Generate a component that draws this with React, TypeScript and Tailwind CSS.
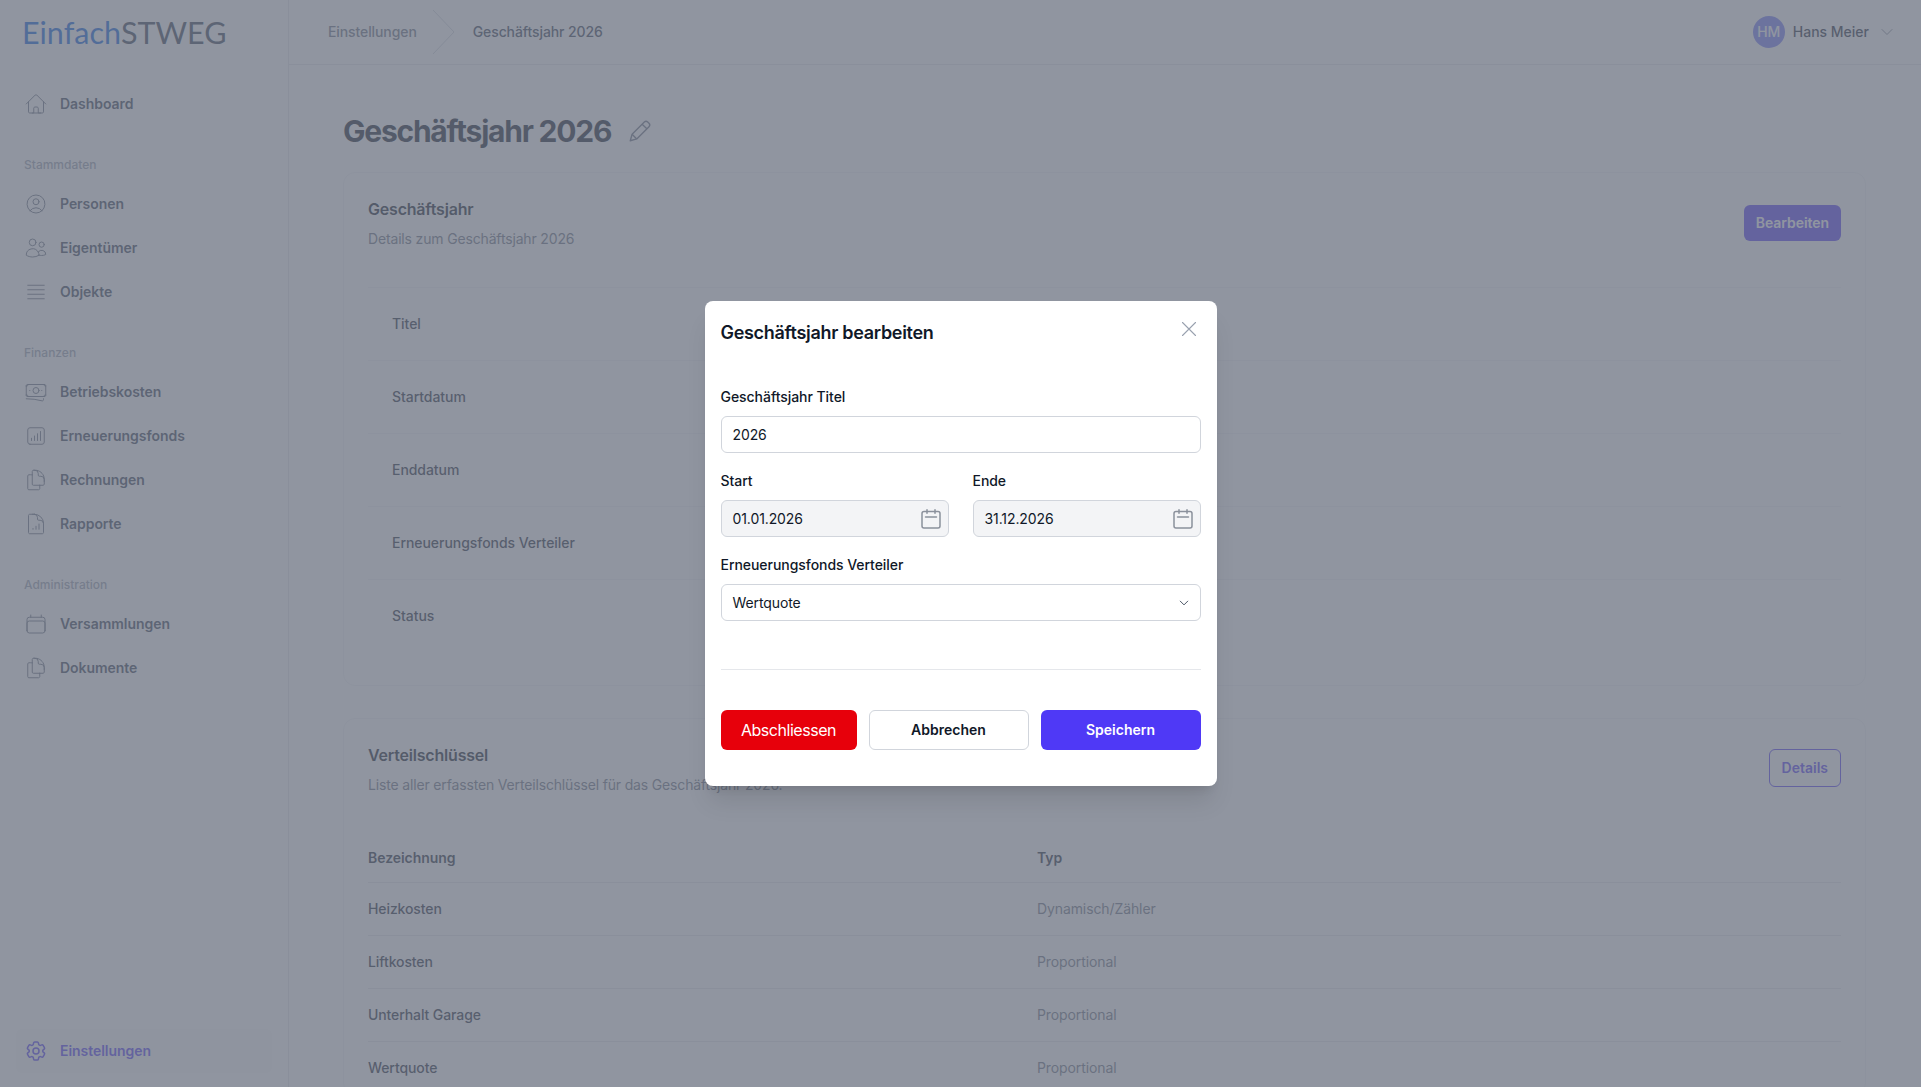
import React from "react";
import {
  HiOutlineHome,
  HiOutlineUserCircle,
  HiOutlineUsers,
  HiOutlineBars4,
  HiOutlineBanknotes,
  HiOutlineChartBarSquare,
  HiOutlineDocumentDuplicate,
  HiOutlineDocumentChartBar,
  HiOutlineCalendar,
  HiOutlineCog6Tooth,
  HiOutlineXMark,
  HiOutlineChevronDown,
} from "react-icons/hi2";

type IconT = React.ComponentType<{ className?: string; strokeWidth?: number }>;

function NavItem({ icon: Icon, label, active }: { icon: IconT; label: string; active?: boolean }) {
  return (
    <div className={`flex h-[44px] items-center gap-[12px] rounded-md px-[8px] text-sm font-semibold tracking-[-0.05px] ${active ? "text-[#4f39f6] bg-gray-50" : "text-gray-700"}`}>
      <Icon className={`h-[24px] w-[24px] ${active ? "text-[#4f39f6]" : "text-gray-500"}`} strokeWidth={active ? 1.5 : 1} />
      <span>{label}</span>
    </div>
  );
}

function NavHeading({ children }: { children: React.ReactNode }) {
  return <div className="mt-[29px] mb-[7px] flex h-[20px] items-center px-[8px] text-xs font-medium text-gray-400">{children}</div>;
}

function DetailRow({ label }: { label: string }) {
  return (
    <div className="flex h-[73px] items-center border-t border-gray-100 pl-[24px] text-sm font-medium tracking-[-0.05px] text-gray-800">
      {label}
    </div>
  );
}

function TableRow({ name, typ }: { name: string; typ: string }) {
  return (
    <div className="grid h-[53px] grid-cols-[669px_1fr] items-center border-t border-gray-200 text-sm tracking-[-0.1px]">
      <span className="font-medium text-gray-800">{name}</span>
      <span className="text-gray-500">{typ}</span>
    </div>
  );
}

function CalIcon() {
  return (
    <svg viewBox="0 0 20 20" className="h-[20px] w-[20px]" fill="none" stroke="#8b919c" strokeWidth="1.5" strokeLinecap="round">
      <rect x="1" y="2.5" width="18" height="16.5" rx="2" />
      <path d="M6 0.75v3.5M14 0.75v3.5M4.5 8h11" />
    </svg>
  );
}

function PencilIcon() {
  return (
    <svg viewBox="0 0 24 24" className="h-[26px] w-[26px] text-gray-500" fill="none" stroke="currentColor" strokeWidth="1.25" strokeLinejoin="round">
      <path d="M3 21l1.7-6L16 3.7a2.2 2.2 0 0 1 3.1 0l1.2 1.2a2.2 2.2 0 0 1 0 3.1L9 19.3z" />
      <path d="M14 5.7l4.3 4.3M4.7 15L9 19.3" />
    </svg>
  );
}

function Field({ label, children }: { label: string; children: React.ReactNode }) {
  return (
    <div className="flex flex-col gap-[9px]">
      <label className="text-sm leading-[20px] font-medium tracking-[-0.05px] text-gray-900">{label}</label>
      {children}
    </div>
  );
}

function Box({ value, disabled, right }: { value: string; disabled?: boolean; right?: React.ReactNode }) {
  return (
    <div className={`flex h-[37px] items-center justify-between rounded-md border border-gray-300 pr-[7px] pl-[11px] text-sm tracking-[-0.1px] text-gray-900 ${disabled ? "bg-gray-100" : "bg-white"}`}>
      <span>{value}</span>
      {right}
    </div>
  );
}

export default function App() {
  return (
    <div className="relative flex h-screen overflow-hidden bg-white font-['Inter',sans-serif]">
      <aside className="flex w-[289px] shrink-0 flex-col border-r border-gray-200 px-[16px]">
        <div className="flex h-[64px] items-center pl-[6px] font-['Lato',sans-serif] text-[30.5px] leading-none">
          <span className="text-[#0a5fe0]">Einfach</span>
          <span className="text-gray-700">STWEG</span>
        </div>
        <nav className="mt-[18px] flex flex-1 flex-col">
          <NavItem icon={HiOutlineHome} label="Dashboard" />
          <NavHeading>Stammdaten</NavHeading>
          <NavItem icon={HiOutlineUserCircle} label="Personen" />
          <NavItem icon={HiOutlineUsers} label="Eigentümer" />
          <NavItem icon={HiOutlineBars4} label="Objekte" />
          <NavHeading>Finanzen</NavHeading>
          <NavItem icon={HiOutlineBanknotes} label="Betriebskosten" />
          <NavItem icon={HiOutlineChartBarSquare} label="Erneuerungsfonds" />
          <NavItem icon={HiOutlineDocumentDuplicate} label="Rechnungen" />
          <NavItem icon={HiOutlineDocumentChartBar} label="Rapporte" />
          <NavHeading>Administration</NavHeading>
          <NavItem icon={HiOutlineCalendar} label="Versammlungen" />
          <NavItem icon={HiOutlineDocumentDuplicate} label="Dokumente" />
          <div className="mt-auto mb-[14px]">
            <NavItem icon={HiOutlineCog6Tooth} label="Einstellungen" active />
          </div>
        </nav>
      </aside>

      <div className="flex min-w-0 flex-1 flex-col">
        <header className="flex h-[65px] shrink-0 items-center justify-between border-b border-gray-200 pr-[26px] pl-[39px]">
          <div className="flex items-center text-sm tracking-[-0.1px]">
            <span className="font-medium text-gray-500">Einstellungen</span>
            <svg viewBox="0 0 24 64" className="mr-[17px] ml-[15px] h-[64px] w-[24px] text-gray-300" fill="none" stroke="currentColor" strokeWidth="1">
              <path d="M1 10l21 22-21 22" />
            </svg>
            <span className="font-medium text-gray-700">Geschäftsjahr 2026</span>
          </div>
          <div className="flex items-center gap-[8px]">
            <div className="flex h-[32px] w-[32px] items-center justify-center rounded-full bg-[#7179f5] text-sm font-medium text-white">HM</div>
            <span className="text-sm font-medium text-gray-800">Hans Meier</span>
            <HiOutlineChevronDown className="ml-[2px] h-[16px] w-[16px] text-gray-500" strokeWidth={1.25} />
          </div>
        </header>

        <main className="flex-1 overflow-hidden pr-[55px] pl-[54px]">
          <div className="flex h-[107px] items-center gap-[16px] pt-[41px] pb-[16px]">
            <h1 className="text-[30px] font-bold tracking-[-1.23px] text-gray-900">Geschäftsjahr 2026</h1>
            <PencilIcon />
          </div>

          <section className="rounded-xl border border-gray-100 px-[24px] pt-[24px] pb-[33px]">
            <div className="flex items-start justify-between">
              <div>
                <h2 className="text-base leading-[24px] font-semibold tracking-[-0.2px] text-gray-900">Geschäftsjahr</h2>
                <p className="mt-[6px] text-sm leading-[24px] tracking-[-0.16px] text-gray-500">Details zum Geschäftsjahr 2026</p>
              </div>
              <button className="mt-[8px] h-[36px] rounded-md bg-[#4f39f6] px-[12px] text-sm font-semibold tracking-[-0.05px] text-white">Bearbeiten</button>
            </div>
            <div className="mt-[36px]">
              <DetailRow label="Titel" />
              <DetailRow label="Startdatum" />
              <DetailRow label="Enddatum" />
              <DetailRow label="Erneuerungsfonds Verteiler" />
              <DetailRow label="Status" />
            </div>
          </section>

          <section className="mt-[32px] rounded-xl border border-gray-100 px-[24px] pt-[24px]">
            <div className="flex items-start justify-between">
              <div>
                <h2 className="text-base leading-[24px] font-semibold tracking-[-0.2px] text-gray-900">Verteilschlüssel</h2>
                <p className="mt-[6px] text-sm leading-[24px] tracking-[-0.16px] text-gray-500">Liste aller erfassten Verteilschlüssel für das Geschäftsjahr 2026.</p>
              </div>
              <button className="mt-[6px] h-[38px] rounded-md border border-[#4f39f6] px-[12px] text-sm font-semibold text-[#4f39f6]">Details</button>
            </div>
            <div className="mt-[37px] grid h-[48px] grid-cols-[669px_1fr] items-center text-sm font-semibold tracking-[-0.05px] text-gray-800">
              <span>Bezeichnung</span>
              <span>Typ</span>
            </div>
            <TableRow name="Heizkosten" typ="Dynamisch/Zähler" />
            <TableRow name="Liftkosten" typ="Proportional" />
            <TableRow name="Unterhalt Garage" typ="Proportional" />
            <TableRow name="Wertquote" typ="Proportional" />
          </section>
        </main>
      </div>

      <div className="absolute inset-0 flex items-center justify-center bg-[#6b7280]/75">
        <div className="relative w-[512px] rounded-lg bg-white px-[16px] pt-[16px] pb-[36px] shadow-xl">
          <HiOutlineXMark className="absolute top-[15px] right-[15px] h-[26px] w-[26px] text-gray-400" strokeWidth={1} />
          <h3 className="text-lg leading-[32px] font-semibold tracking-[-0.3px] text-gray-900">Geschäftsjahr bearbeiten</h3>
          <div className="mt-[38px] flex flex-col gap-[18px]">
            <Field label="Geschäftsjahr Titel"><Box value="2026" /></Field>
            <div className="grid grid-cols-2 gap-[24px]">
              <Field label="Start"><Box value="01.01.2026" disabled right={<CalIcon />} /></Field>
              <Field label="Ende"><Box value="31.12.2026" disabled right={<CalIcon />} /></Field>
            </div>
            <Field label="Erneuerungsfonds Verteiler">
              <Box value="Wertquote" right={<HiOutlineChevronDown className="mr-[3px] h-[12px] w-[12px] text-gray-600" strokeWidth={2} />} />
            </Field>
          </div>
          <div className="mt-[48px] border-t border-gray-200" />
          <div className="mt-[40px] grid grid-cols-[136px_160px_160px] gap-[12px]">
            <button className="h-[40px] rounded-md bg-[#e7000b] text-base tracking-[-0.45px] text-white">Abschliessen</button>
            <button className="h-[40px] rounded-md border border-gray-300 bg-white text-sm font-semibold text-gray-900">Abbrechen</button>
            <button className="h-[40px] rounded-md bg-[#4f39f6] text-sm font-semibold text-white">Speichern</button>
          </div>
        </div>
      </div>
    </div>
  );
}
